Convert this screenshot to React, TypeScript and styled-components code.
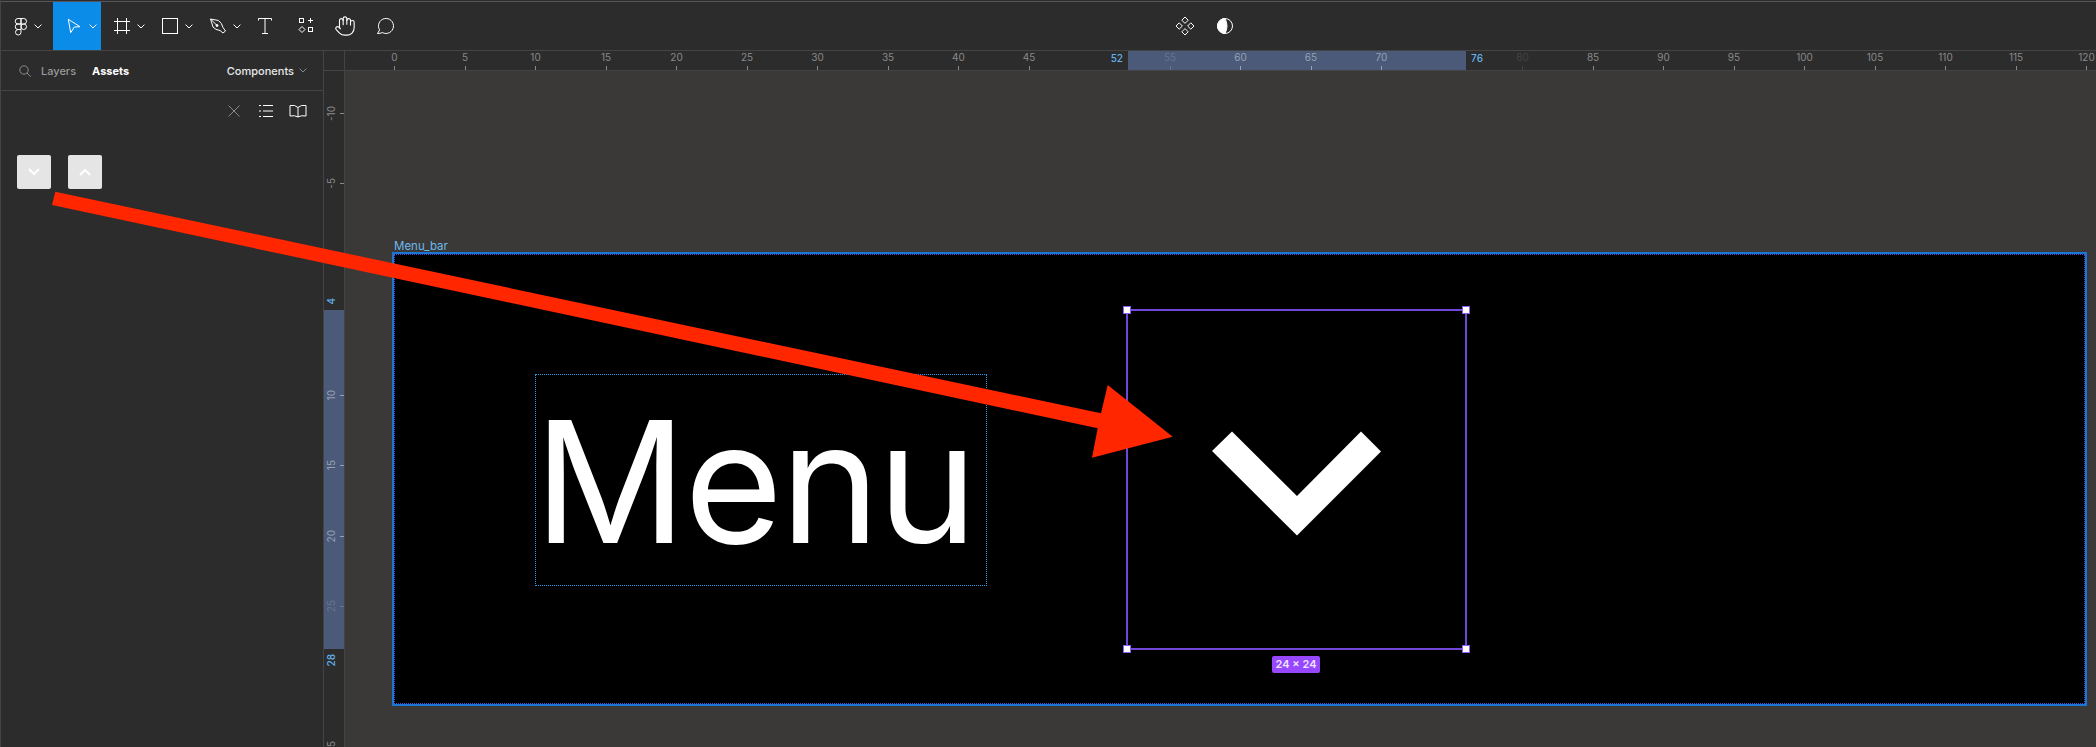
import React from 'react';
import styled, { createGlobalStyle } from 'styled-components';
import { Hand } from 'lucide-react';

const UNIT = 14.1;
const X_ZERO = 49.5;
const Y_ZERO = 183;

const GlobalStyle = createGlobalStyle`
  html, body {
    margin: 0;
    padding: 0;
    background: #2c2c2c;
  }
  * {
    box-sizing: border-box;
  }
`;

const Page = styled.div`
  position: relative;
  width: 2096px;
  height: 747px;
  overflow: hidden;
  display: flex;
  flex-direction: column;
  background: #2c2c2c;
  border-left: 1px solid #444;
  font-family: Inter, "Liberation Sans", sans-serif;
`;

const TopEdge = styled.div`
  height: 1px;
  margin-top: 1px;
  background: #56565c;
  flex: none;
`;

const Toolbar = styled.header`
  height: 49px;
  flex: none;
  display: flex;
  border-bottom: 1px solid #444;
`;

const ToolButton = styled.div<{ $width?: number; $active?: boolean; $gap?: number }>`
  width: ${p => p.$width ?? 48}px;
  height: 48px;
  display: flex;
  align-items: center;
  padding-left: ${p => (p.$width ? 8 : 9)}px;
  gap: ${p => p.$gap ?? 3}px;
  background: ${p => (p.$active ? '#0c8ce9' : 'transparent')};
`;

const PlainTool = styled.div`
  width: 40px;
  height: 48px;
  display: flex;
  align-items: center;
  justify-content: center;
  color: #fff;
`;

const CenterTools = styled.div`
  display: flex;
  margin-left: 760px;
`;

const Main = styled.div`
  flex: 1;
  display: flex;
  min-height: 0;
`;

const Panel = styled.aside`
  width: 323px;
  flex: none;
  border-right: 1px solid #444;
  display: flex;
  flex-direction: column;
`;

const PanelTabs = styled.div`
  height: 40px;
  flex: none;
  display: flex;
  align-items: center;
  padding: 0 16px 0 17px;
  border-bottom: 1px solid #444;
  font-size: 11px;
`;

const Tab = styled.span<{ $active?: boolean }>`
  margin-left: ${p => (p.$active ? 16 : 9)}px;
  font-weight: ${p => (p.$active ? 700 : 500)};
  color: ${p => (p.$active ? '#fff' : '#9a9a9a')};
`;

const PageSwitch = styled.div`
  margin-left: auto;
  display: flex;
  align-items: center;
  gap: 5px;
  font-weight: 500;
  color: #e8e8e8;
`;

const AssetActions = styled.div`
  height: 40px;
  display: flex;
  justify-content: flex-end;
  align-items: center;
  gap: 12px;
  padding-right: 15px;
`;

const AssetGrid = styled.div`
  display: flex;
  gap: 17px;
  padding: 24px 0 0 16px;
`;

const AssetTile = styled.div`
  width: 34px;
  height: 34px;
  border-radius: 2px;
  background: #e5e5e5;
  display: flex;
  align-items: center;
  justify-content: center;
`;

const Workspace = styled.div`
  flex: 1;
  display: grid;
  grid-template-columns: 21px 1fr;
  grid-template-rows: 20px 1fr;
  min-width: 0;
`;

const RulerCorner = styled.div`
  border-right: 1px solid #444;
  border-bottom: 1px solid #444;
`;

const TopRuler = styled.div`
  position: relative;
  overflow: hidden;
  border-bottom: 1px solid #444;
`;

const SideRuler = styled.div`
  position: relative;
  overflow: hidden;
  border-right: 1px solid #444;
`;

const TopBand = styled.div.attrs<{ $from: number; $to: number }>(p => ({
  style: { left: X_ZERO + p.$from * UNIT, width: (p.$to - p.$from) * UNIT },
}))`
  position: absolute;
  top: 0;
  bottom: 0;
  background: #4a5a78;
`;

const SideBand = styled.div.attrs<{ $from: number; $to: number }>(p => ({
  style: { top: Y_ZERO + p.$from * UNIT, height: (p.$to - p.$from) * UNIT },
}))`
  position: absolute;
  left: 0;
  right: 0;
  background: #4a5a78;
`;

const toneColor = {
  plain: '#8a8a8a',
  band: '#97a1b5',
  bandFaint: '#67738c',
  faint: '#444',
  blue: '#62b2ec',
};

type Tone = keyof typeof toneColor;

const TopMark = styled.div.attrs<{ $value: number; $tone: Tone }>(p => ({
  style: { left: X_ZERO + p.$value * UNIT },
}))`
  position: absolute;
  top: 0;
  bottom: 0;
  width: 0;
  display: flex;
  flex-direction: column;
  align-items: center;
  justify-content: space-between;
  font-size: 10px;
  line-height: 12px;
  padding-top: 0;
  color: ${p => toneColor[p.$tone]};
`;

const SideMark = styled.div.attrs<{ $value: number; $tone: Tone }>(p => ({
  style: { top: Y_ZERO + p.$value * UNIT },
}))`
  position: absolute;
  left: 0;
  right: 0;
  height: 0;
  display: flex;
  align-items: center;
  justify-content: space-between;
  font-size: 10px;
  line-height: 12px;
  padding-left: 1px;
  color: ${p => toneColor[p.$tone]};
`;

const TopLabel = styled.span`
  white-space: nowrap;
`;

const SideLabel = styled.span`
  white-space: nowrap;
  writing-mode: vertical-rl;
  transform: rotate(180deg);
`;

const TopTick = styled.i`
  display: block;
  width: 1px;
  height: 4px;
  background: currentColor;
  flex: none;
`;

const SideTick = styled.i`
  display: block;
  width: 4px;
  height: 1px;
  background: currentColor;
  flex: none;
`;

const BoundLabel = styled.span.attrs<{ $value: number; $side: 'start' | 'end' }>(p => ({
  style: { left: X_ZERO + p.$value * UNIT + (p.$side === 'start' ? -17 : 5) },
}))`
  position: absolute;
  top: 1px;
  font-size: 10px;
  line-height: 12px;
  font-weight: 500;
  color: ${toneColor.blue};
`;

const SideBound = styled.span.attrs<{ $value: number; $side: 'start' | 'end' }>(p => ({
  style: { top: Y_ZERO + p.$value * UNIT + (p.$side === 'start' ? -12 : 5) },
}))`
  position: absolute;
  left: 1px;
  font-size: 10px;
  line-height: 12px;
  font-weight: 500;
  color: ${toneColor.blue};
  writing-mode: vertical-rl;
  transform: rotate(180deg);
`;

const Canvas = styled.main`
  position: relative;
  overflow: hidden;
  background: #3a3937;
`;

const FrameLabel = styled.div`
  position: absolute;
  left: 49px;
  top: 168px;
  font-size: 11.5px;
  line-height: 14px;
  color: #6db8ec;
`;

const Frame = styled.div`
  position: absolute;
  left: 47px;
  top: 181px;
  width: 1695px;
  height: 454px;
  background: #000;
  border: 2px solid #1a76d2;
  outline: 1px dotted #4c4be0;
  outline-offset: -3px;
`;

const TextBox = styled.div`
  position: absolute;
  left: 141px;
  top: 120px;
  width: 452px;
  height: 212px;
  border: 1px dotted #2a9ae8;
  color: #fff;
  font-size: 169px;
  font-weight: 400;
  letter-spacing: -2.5px;
  line-height: 213px;
  text-indent: -2px;
  white-space: nowrap;
  text-align: left;
`;

const SelectionBox = styled.div`
  position: absolute;
  left: 732px;
  top: 55px;
  width: 341px;
  height: 341px;
  border: 2px solid #7047d8;
`;

const Handle = styled.span<{ $x: 'left' | 'right'; $y: 'top' | 'bottom' }>`
  position: absolute;
  ${p => p.$x}: -5px;
  ${p => p.$y}: -5px;
  width: 8px;
  height: 8px;
  background: #fff;
  border: 1.5px solid #8a5cf0;
`;

const SizeBadge = styled.div`
  position: absolute;
  left: 144px;
  top: 345px;
  width: 48px;
  height: 17px;
  border-radius: 2px;
  background: #9747ff;
  color: #eee3ff;
  font-size: 11px;
  font-weight: 600;
  line-height: 17px;
  text-align: center;
  white-space: nowrap;
`;

const ChevronMark = styled.svg`
  position: absolute;
  left: 84px;
  top: 120px;
`;

const ArrowOverlay = styled.svg`
  position: absolute;
  left: 0;
  top: 0;
  pointer-events: none;
`;

const Chevron = ({ color = '#fff', up = false }: { color?: string; up?: boolean }) => (
  <svg width="8" height="5" viewBox="0 0 8 5" fill="none" stroke={color} strokeWidth="1">
    <path d={up ? 'M.6 4.4 4 1l3.4 3.4' : 'M.6.6 4 4 7.4.6'} />
  </svg>
);

const Icon = ({ children }: { children: React.ReactNode }) => (
  <svg width="24" height="24" viewBox="0 0 24 24" fill="none" stroke="#fff" strokeWidth="1">
    {children}
  </svg>
);

const figmaLogo = (
  <Icon>
    <path d="M12 4.5v5.5H9a2.75 2.75 0 0 1 0-5.5zM12 4.5h2.75a2.75 2.75 0 0 1 0 5.5H12zM12 10v5.5H9a2.75 2.75 0 0 1 0-5.5z" />
    <circle cx="14.75" cy="12.75" r="2.75" />
    <path d="M9 15.5h3v2.75a2.75 2.75 0 1 1-3-2.75z" />
  </Icon>
);

const tileChevron = (up: boolean) => (
  <svg width="12" height="8" viewBox="0 0 12 8" fill="none" stroke="#fff" strokeWidth="2">
    <path d={up ? 'M1 7l5-5 5 5' : 'M1 1l5 5 5-5'} />
  </svg>
);

const topMarks: [number, Tone][] = [
  [0, 'plain'], [5, 'plain'], [10, 'plain'], [15, 'plain'], [20, 'plain'], [25, 'plain'],
  [30, 'plain'], [35, 'plain'], [40, 'plain'], [45, 'plain'],
  [55, 'bandFaint'], [60, 'band'], [65, 'band'], [70, 'band'],
  [80, 'faint'], [85, 'plain'], [90, 'plain'], [95, 'plain'], [100, 'plain'],
  [105, 'plain'], [110, 'plain'], [115, 'plain'], [120, 'plain'],
];

const sideMarks: [number, Tone][] = [
  [-10, 'plain'], [-5, 'plain'], [10, 'band'], [15, 'band'], [20, 'band'], [25, 'bandFaint'], [35, 'plain'],
];

const App = () => {
  return (
    <Page>
      <GlobalStyle />
      <TopEdge />
      <Toolbar>
        <ToolButton $width={52} $gap={1}>
          {figmaLogo}
          <Chevron />
        </ToolButton>
        <ToolButton $active>
          <Icon>
            <path d="M6.3 5.3 18 12.7l-5.7.3-3.6 5.7z" />
          </Icon>
          <Chevron />
        </ToolButton>
        <ToolButton>
          <Icon>
            <path d="M7.5 4v16M16.5 4v16M4 7.5h16M4 16.5h16" />
          </Icon>
          <Chevron />
        </ToolButton>
        <ToolButton>
          <Icon>
            <rect x="4.5" y="4.5" width="15" height="15" />
          </Icon>
          <Chevron />
        </ToolButton>
        <ToolButton>
          <Icon>
            <path d="M4.5 5l8 1.5q3.5 2.5 4.5 7l2.5 3.5-2.5 2-3-2.5q-4.5-.5-7-3.5zM4.5 5l6 6" />
            <circle cx="11" cy="11.5" r="1" fill="#fff" />
          </Icon>
          <Chevron />
        </ToolButton>
        <PlainTool>
          <Icon>
            <path d="M5.5 6.5v-2h13v2M12 4.5v15M9 19.5h6" />
          </Icon>
        </PlainTool>
        <PlainTool>
          <Icon>
            <rect x="6.5" y="4.5" width="4" height="4" />
            <path d="M17.5 4v5M15 6.5h5" />
            <path d="M9 12.5l3 3-3 3-3-3z" />
            <rect x="15.5" y="13.5" width="4" height="4" />
          </Icon>
        </PlainTool>
        <PlainTool>
          <Hand size={22} strokeWidth={1.2} />
        </PlainTool>
        <PlainTool>
          <Icon>
            <path d="M4.5 19.5l2.1-3.6a7.5 7.5 0 1 1 2.9 2.7q-2.5.9-5 .9z" />
          </Icon>
        </PlainTool>
        <CenterTools>
          <PlainTool>
            <Icon>
              <path d="M12 3l3.200 3.200-3.200 3.200-3.200-3.200zM12 14.600l3.200 3.200-3.200 3.200-3.200-3.200zM6.200 8.800l3.200 3.200-3.200 3.200L3 12zM17.800 8.800L21 12l-3.200 3.200-3.200-3.200z" />
            </Icon>
          </PlainTool>
          <PlainTool>
            <Icon>
              <circle cx="12" cy="12" r="7.5" />
              <path d="M12 4.500a7.500 7.500 0 0 0 0 15 16 16 0 0 0 0-15z" fill="#fff" />
            </Icon>
          </PlainTool>
        </CenterTools>
      </Toolbar>
      <Main>
        <Panel>
          <PanelTabs>
            <svg width="14" height="14" viewBox="0 0 14 14" fill="none" stroke="#8a8a8a" strokeWidth="1">
              <circle cx="6" cy="6" r="4.2" />
              <path d="M9 9l3.8 3.8" />
            </svg>
            <Tab>Layers</Tab>
            <Tab $active>Assets</Tab>
            <PageSwitch>
              Components
              <Chevron color="#8a8a8a" />
            </PageSwitch>
          </PanelTabs>
          <AssetActions>
            <svg width="20" height="20" viewBox="0 0 20 20" fill="none" stroke="#8a8a8a" strokeWidth="1">
              <path d="M4.5 4.5l11 11M15.500 4.500l-11 11" />
            </svg>
            <svg width="20" height="20" viewBox="0 0 20 20" fill="none" stroke="#fff" strokeWidth="1">
              <path d="M7 4.500h10M7 10h10M7 15.500h10M3 4.500h2M3 10h2M3 15.500h2" />
            </svg>
            <svg width="20" height="20" viewBox="0 0 20 20" fill="none" stroke="#fff" strokeWidth="1">
              <path d="M10 6.500Q7 3.500 2 4.500v10.500q5-1 8 1 3-2 8-1V4.500q-5-1-8 2zM10 6.500v9.500" />
            </svg>
          </AssetActions>
          <AssetGrid>
            <AssetTile>{tileChevron(false)}</AssetTile>
            <AssetTile>{tileChevron(true)}</AssetTile>
          </AssetGrid>
        </Panel>
        <Workspace>
          <RulerCorner />
          <TopRuler>
            <TopBand $from={52} $to={76} />
            {topMarks.map(([value, tone]) => (
              <TopMark key={value} $value={value} $tone={tone}>
                <TopLabel>{value}</TopLabel>
                <TopTick />
              </TopMark>
            ))}
            <BoundLabel $value={52} $side="start">52</BoundLabel>
            <BoundLabel $value={76} $side="end">76</BoundLabel>
          </TopRuler>
          <SideRuler>
            <SideBand $from={4} $to={28} />
            {sideMarks.map(([value, tone]) => (
              <SideMark key={value} $value={value} $tone={tone}>
                <SideLabel>{value}</SideLabel>
                <SideTick />
              </SideMark>
            ))}
            <SideBound $value={4} $side="start">4</SideBound>
            <SideBound $value={28} $side="end">28</SideBound>
          </SideRuler>
          <Canvas>
            <FrameLabel>Menu_bar</FrameLabel>
            <Frame>
              <TextBox>Menu</TextBox>
              <SelectionBox>
                <ChevronMark width="170" height="105" viewBox="0 0 170 105" fill="#fff">
                  <polygon points="20,0.500 85,65 149,0.500 169,20.500 85,104.500 0,20" />
                </ChevronMark>
                <Handle $x="left" $y="top" />
                <Handle $x="right" $y="top" />
                <Handle $x="left" $y="bottom" />
                <Handle $x="right" $y="bottom" />
                <SizeBadge>24 × 24</SizeBadge>
              </SelectionBox>
            </Frame>
          </Canvas>
        </Workspace>
      </Main>
      <ArrowOverlay width="2096" height="747" viewBox="0 0 2096 747" fill="#ff2600">
        <polygon points="54.300,191.700 1100,413.300 1106.700,385 1171.700,436.700 1091,457.700 1096.700,428.300 51,205" />
      </ArrowOverlay>
    </Page>
  );
};

export default App;
